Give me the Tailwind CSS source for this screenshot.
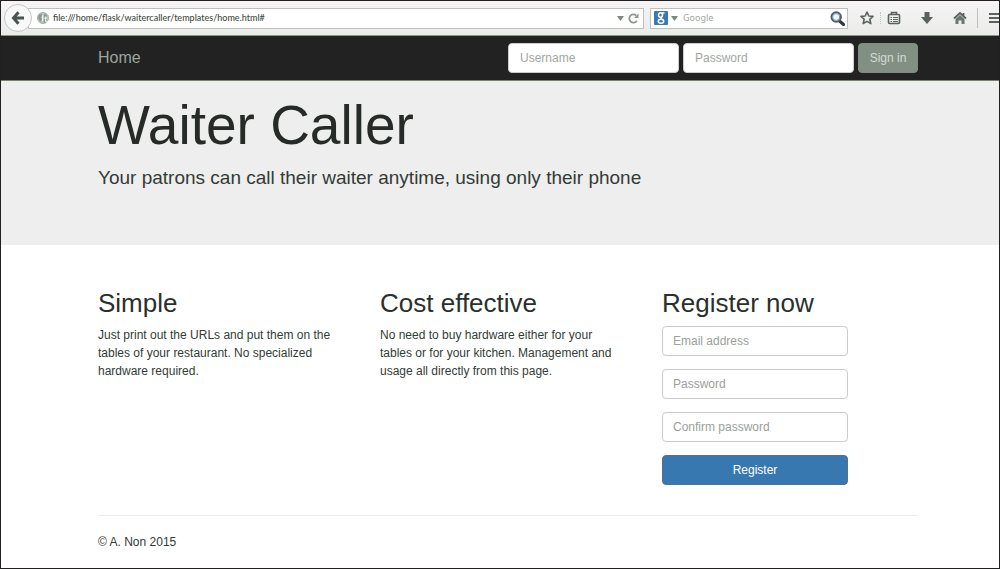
<!DOCTYPE html>
<html lang="en">
<head>
<meta charset="utf-8">
<meta name="viewport" content="width=device-width, initial-scale=1">
<title>Waiter Caller</title>
<script src="https://cdn.jsdelivr.net/npm/@tailwindcss/browser@4"></script>
</head>
<body class="min-h-screen flex flex-col overflow-x-hidden border border-[#231f20] bg-white font-['Liberation_Sans',Arial,sans-serif] text-xs leading-[18px] text-[#333b35]">

<!-- Browser toolbar -->
<div class="flex h-[35px] shrink-0 items-center border-b border-[#8c978c] bg-linear-to-b from-[#f6f4f5] to-[#ebebea] pl-[3px] font-['Noto_Sans',sans-serif] text-[9px] text-[#59645a]">
  <button type="button" aria-label="Back" class="z-10 flex size-7 shrink-0 items-center justify-center rounded-full border border-[#c3c9c6] bg-[#f8f8f8]">
    <svg class="size-[14px]" viewBox="0 0 14 14" fill="none" stroke="#4b544f" stroke-width="3"><path d="M7.500 1.200 2.500 7l5 5.800M2.500 7H13"/></svg>
  </button>
  <div class="-ml-1 flex h-[21px] flex-1 items-center border border-[#bdc1be] bg-white pl-2 pr-1">
    <svg class="mr-1 size-3 shrink-0" viewBox="0 0 12 12"><circle cx="6" cy="6" r="5.500" fill="#c3cac5" stroke="#94a098" stroke-width=".8"/><path d="M2 2.500 5 2l1 1.500-2 1.500 1 2-1 3-2-2-.8-3zM7 1.500l3 1.500-1 2.500H7zM7 7l3 .5-1.500 3H6.500z" fill="#8d998f"/><path d="M5.500 3v6M8.500 4.500v5h2" stroke="#fff" fill="none" stroke-width=".8"/></svg>
    <input type="text" aria-label="Address" value="file:///home/flask/waitercaller/templates/home.html#" class="min-w-0 flex-1 bg-transparent font-['Lato','Noto_Sans',sans-serif] text-[9px] font-medium text-[#3f4a41] outline-none">
    <button type="button" aria-label="History" class="mr-1 flex"><svg class="h-[5px] w-[7px]" viewBox="0 0 7 5" fill="#7d887e"><path d="M0 0h7L3.500 5z"/></svg></button>
    <button type="button" aria-label="Reload" class="flex"><svg class="size-[11px]" viewBox="0 0 11 11" fill="none" stroke="#8e9890" stroke-width="1.800"><path d="M8.800 7.800A4.100 4.100 0 1 1 8.200 2.500"/><path d="M10.500.5v4.500H6z" fill="#8e9890" stroke="none"/></svg></button>
  </div>
  <div class="ml-[6px] flex h-[21px] w-[198px] shrink-0 items-center border border-[#bdc1be] bg-white pl-[3px] pr-[2px]">
    <svg class="size-[14px] shrink-0" viewBox="0 0 14 14"><rect width="14" height="14" rx="1" fill="#3a78b0"/><g fill="none" stroke="#fff" stroke-width="1.500"><ellipse cx="6.500" cy="4" rx="2" ry="2.300"/><path d="M8 2h2.500M8 5.500C6.500 7 6.500 7 8 8"/><ellipse cx="7" cy="10.300" rx="2.700" ry="2"/></g></svg>
    <button type="button" aria-label="Choose search engine" class="ml-[3px] mr-[5px] flex"><svg class="h-[5px] w-[7px]" viewBox="0 0 7 5" fill="#7d887e"><path d="M0 0h7L3.500 5z"/></svg></button>
    <input type="search" aria-label="Search" placeholder="Google" class="min-w-0 flex-1 bg-transparent outline-none placeholder:text-[#a0a8a1]">
    <button type="button" aria-label="Search" class="flex"><svg class="size-[15px]" viewBox="0 0 15 15" fill="none"><path d="m9.500 10 4 3.500" stroke="#303a3a" stroke-width="3" stroke-linecap="round"/><circle cx="6.200" cy="6" r="4.700" fill="#f2f6fa" stroke="#4f5d66" stroke-width="2"/><circle cx="6.200" cy="6" r="3.500" stroke="#6d9cc9" stroke-width="1"/></svg></button>
  </div>
  <div class="ml-3 flex shrink-0 items-center">
    <button type="button" aria-label="Bookmark" class="flex"><svg class="size-[14px]" viewBox="0 0 14 14" fill="none" stroke="#58625b" stroke-width="1.600" stroke-linejoin="round"><path d="m7 1 1.800 4 4.200.4-3.200 2.900 1 4.300L7 10.400l-3.800 2.200 1-4.300L1 5.400 5.200 5z"/></svg></button>
    <span class="ml-[6px] h-3 border-l border-dotted border-[#bcc1bd]"></span>
    <button type="button" aria-label="Bookmarks list" class="ml-[6px] flex"><svg class="size-[14px]" viewBox="0 0 14 14" fill="none" stroke="#58625b"><rect x="1.500" y="3.500" width="11" height="9" rx="1" stroke-width="1.600"/><path d="M4.500 3V1.500h5V3" stroke-width="1.600"/><path d="M3.500 6.500h1.500M6 6.500h5M3.500 8.500h1.500M6 8.500h5M3.500 10.500h1.500M6 10.500h5"/></svg></button>
    <button type="button" aria-label="Downloads" class="ml-[19px] flex"><svg class="size-[14px]" viewBox="0 0 14 14" fill="#58625b"><path d="M4.500 1h5v5H13l-6 7-6-7h3.500z"/></svg></button>
    <button type="button" aria-label="Home page" class="ml-[19px] flex"><svg class="size-[14px]" viewBox="0 0 14 14"><path d="M1 7.500 7 2l6 5.500M10.500 2v3" fill="none" stroke="#58625b" stroke-width="1.800"/><path d="M2.500 8 7 4l4.500 4v5h-3V9.500h-3V13h-3z" fill="#6d776f"/></svg></button>
    <span class="ml-[10px] h-5 border-l border-[#bfc3c0]"></span>
    <button type="button" aria-label="Menu" class="ml-[11px] flex"><svg class="h-3 w-[10px]" viewBox="0 0 10 12" stroke="#58625b" stroke-width="2.200"><path d="M0 2h10M0 6h10M0 10h10"/></svg></button>
  </div>
</div>

<!-- Navigation -->
<nav class="flex h-[45px] shrink-0 items-center border-b border-[#74826f] bg-[#222] pl-[97px] pr-[81px]">
  <a href="#" class="mr-auto text-base text-[#9da59e]">Home</a>
  <form class="flex gap-1" onsubmit="return false">
    <input type="text" aria-label="Username" placeholder="Username" class="h-[30px] w-[171px] rounded border border-[#ccc] bg-white px-[11px] outline-none placeholder:text-[#a0a6a1]">
    <input type="password" aria-label="Password" placeholder="Password" class="h-[30px] w-[171px] rounded border border-[#ccc] bg-white px-[11px] outline-none placeholder:text-[#a0a6a1]">
    <button type="submit" class="h-[30px] w-[60px] rounded border border-[#7f8d80] bg-[#819082] text-[#d5dad5]">Sign in</button>
  </form>
</nav>

<!-- Banner -->
<header class="h-[164px] shrink-0 bg-[#eee] pl-[97px] pr-[81px] pt-[14px]">
  <h1 class="text-[55px] leading-[60px] text-[#262b27]">Waiter Caller</h1>
  <p class="mt-[11px] text-[19px] leading-[24px]">Your patrons can call their waiter anytime, using only their phone</p>
</header>

<!-- Content -->
<main class="ml-[97px] mr-[81px]">
  <div class="grid grid-cols-3 gap-[26px] pt-[43px]">
    <section>
      <h2 class="mb-[8px] text-[26px] leading-[30px] text-[#2a302b]">Simple</h2>
      <p>Just print out the URLs and put them on the<br>tables of your restaurant. No specialized<br>hardware required.</p>
    </section>
    <section>
      <h2 class="mb-[8px] text-[26px] leading-[30px] text-[#2a302b]">Cost effective</h2>
      <p>No need to buy hardware either for your<br>tables or for your kitchen. Management and<br>usage all directly from this page.</p>
    </section>
    <section>
      <h2 class="mb-[8px] text-[26px] leading-[30px] text-[#2a302b]">Register now</h2>
      <form class="flex w-[186px] flex-col gap-[13px]" onsubmit="return false">
        <input type="email" aria-label="Email address" placeholder="Email address" class="h-[30px] rounded border border-[#ccc] px-[10px] outline-none placeholder:text-[#9aa09b]">
        <input type="password" aria-label="Password" placeholder="Password" class="h-[30px] rounded border border-[#ccc] px-[10px] outline-none placeholder:text-[#9aa09b]">
        <input type="password" aria-label="Confirm password" placeholder="Confirm password" class="h-[30px] rounded border border-[#ccc] px-[10px] outline-none placeholder:text-[#9aa09b]">
        <button type="submit" class="h-[30px] rounded border border-[#53718a] bg-[#3878b1] text-white">Register</button>
      </form>
    </section>
  </div>
  <footer class="mt-[30px] border-t border-[#eee] pt-[17px]">
    <p>© A. Non 2015</p>
  </footer>
</main>
</body>
</html>
